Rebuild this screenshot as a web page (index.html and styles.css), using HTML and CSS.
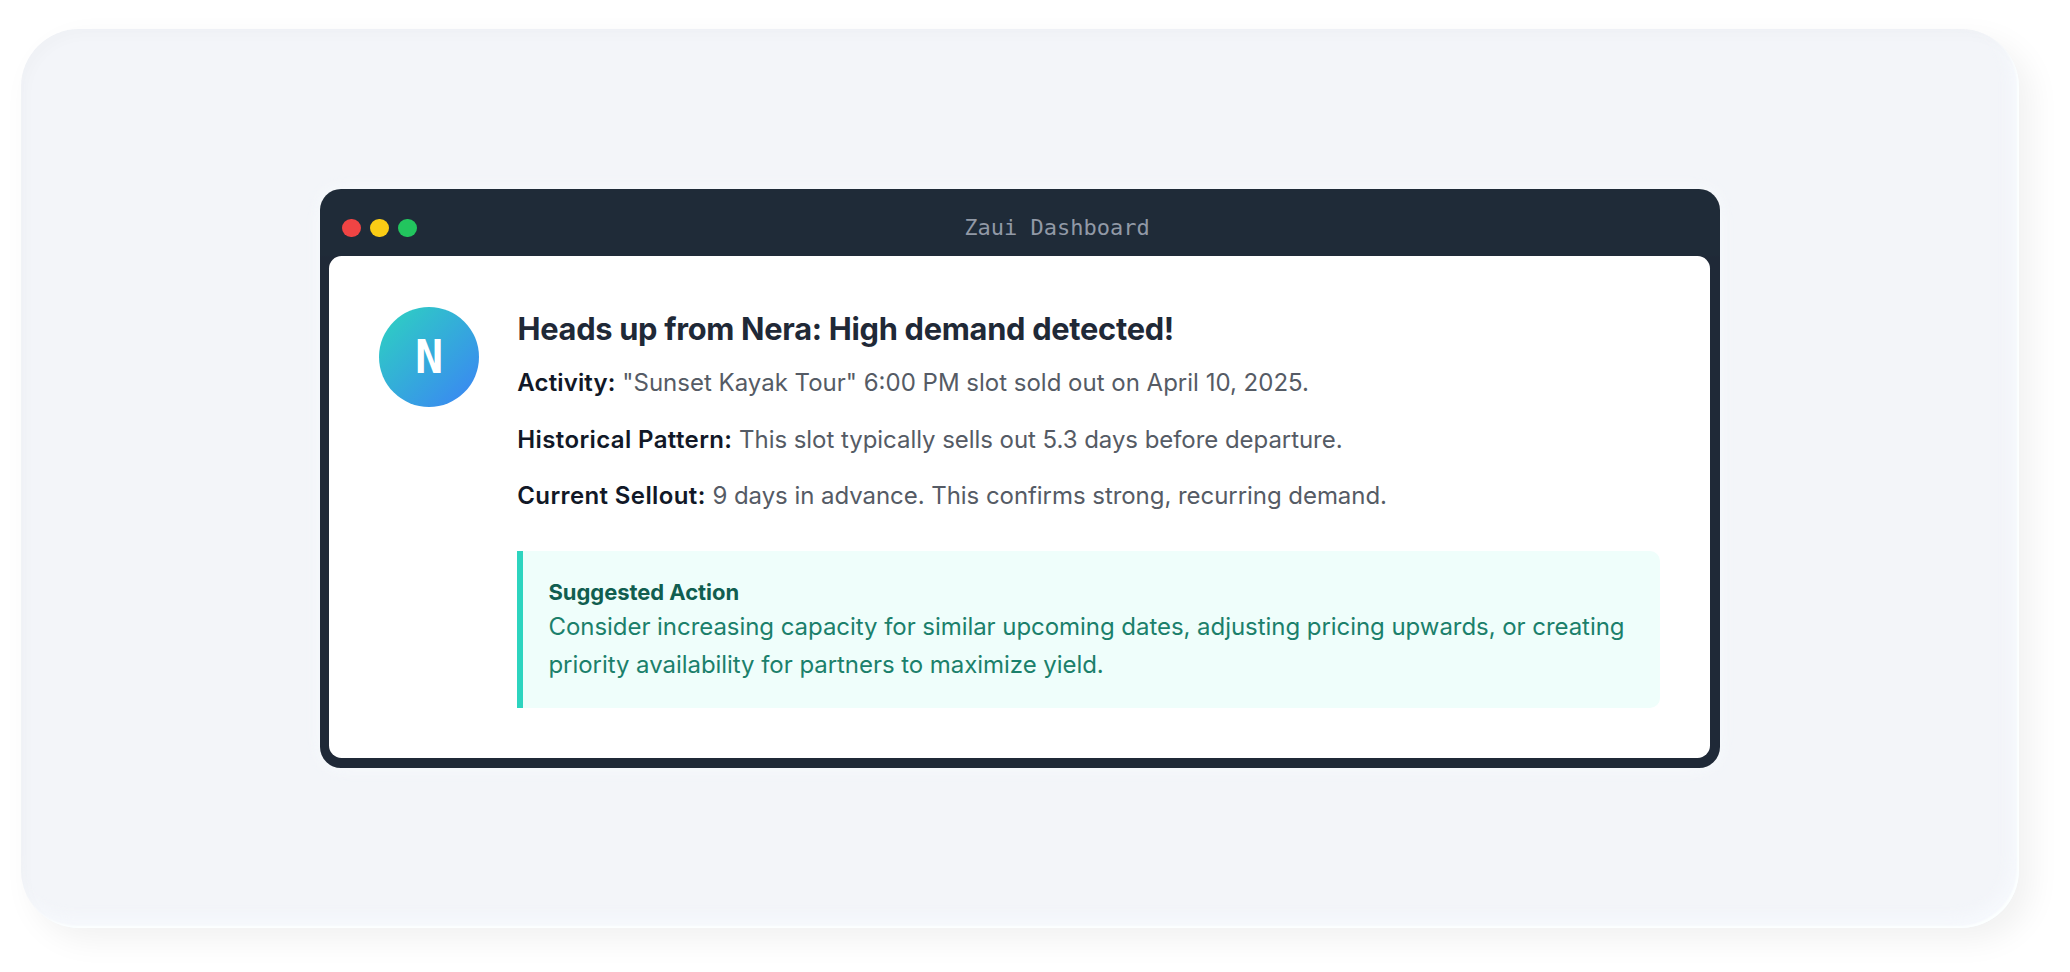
FILE: index.html
```html
<!DOCTYPE html>
<html lang="en">
<head>
<meta charset="utf-8">
<title>Zaui Dashboard</title>
<link rel="stylesheet" href="styles.css">
</head>
<body>
<main class="stage">
  <section class="window">
    <header class="titlebar">
      <div class="dots"><span class="dot red"></span><span class="dot yellow"></span><span class="dot green"></span></div>
      <div class="window-title">Zaui Dashboard</div>
    </header>
    <div class="panel">
      <div class="avatar">N</div>
      <div class="content">
        <h1 class="heading">Heads up from Nera: High demand detected!</h1>
        <p class="fact activity"><strong>Activity:</strong> <span>"Sunset Kayak Tour" 6:00 PM slot sold out on April 10, 2025.</span></p>
        <p class="fact"><strong>Historical Pattern:</strong> <span>This slot typically sells out 5.3 days before departure.</span></p>
        <p class="fact"><strong>Current Sellout:</strong> <span>9 days in advance. This confirms strong, recurring demand.</span></p>
        <aside class="callout">
          <h2 class="callout-title">Suggested Action</h2>
          <p class="callout-text">Consider increasing capacity for similar upcoming dates, adjusting pricing upwards, or creating<br>priority availability for partners to maximize yield.</p>
        </aside>
      </div>
    </div>
  </section>
</main>
</body>
</html>
```
FILE: styles.css
```css
* { box-sizing: border-box; margin: 0; }
body {
  height: 972px;
  padding: 29px 51px 44px 21px;
  background: #fff;
  font-family: Inter, "Liberation Sans", sans-serif;
  overflow: hidden;
}
.stage {
  height: 899px;
  display: flex;
  align-items: center;
  justify-content: center;
  padding-right: 1px;
  padding-bottom: 1px;
  border-radius: 58px;
  background: #f3f5f9;
  box-shadow: 12px 12px 32px rgba(0, 0, 0, .06),
    inset 6px 8px 12px rgba(0, 0, 0, .015),
    inset -2px -2px 2px #fcffff,
    inset -8px -10px 16px rgba(248, 251, 255, .7);
}
.window {
  width: 1400px;
  height: 579px;
  padding: 9.4px;
  border-radius: 21px;
  background: linear-gradient(#1f2b38 66px, #1f2937 68px);
  box-shadow: 0 0 18px rgba(250, 253, 255, .7);
}
.titlebar {
  height: 58.6px;
  display: flex;
  align-items: center;
  padding: 1.6px 13px 0;
}
.dots { display: flex; gap: 9.4px; }
.dot { width: 18.8px; height: 18.8px; border-radius: 50%; }
.red { background: #ef4444; }
.yellow { background: #facc15; }
.green { background: #22c55e; }
.window-title {
  flex: 1;
  text-align: center;
  font: 22px/31px "DejaVu Sans Mono", monospace;
  color: #9199a6;
}
.panel {
  height: 501.8px;
  display: flex;
  gap: 37.6px;
  padding: 50.2px;
  border-radius: 12.5px;
  background: #fff;
}
.avatar {
  flex: none;
  width: 100px;
  height: 100px;
  border-radius: 50%;
  display: flex;
  align-items: center;
  justify-content: center;
  background: linear-gradient(135deg, #2dd4bf, #3b82f6);
  color: #fff;
  font: bold 47px/1 "DejaVu Sans Mono", monospace;
}
.content { flex: 1; white-space: nowrap; }
.heading {
  padding: .5px 0 0 .8px;
  margin-bottom: 13px;
  font-size: 30.8px;
  line-height: 43.9px;
  font-weight: 700;
  letter-spacing: -.29px;
  color: #1f2937;
}
.fact {
  padding-left: .6px;
  margin-bottom: 18.9px;
  font-size: 24px;
  line-height: 37.6px;
  letter-spacing: -.05px;
  color: #555b65;
}
.fact strong { font-weight: 600; letter-spacing: .38px; color: #111827; }
.activity { letter-spacing: 0; }
.activity strong { letter-spacing: .15px; }
.callout {
  margin-top: 36.2px;
  padding: 25.8px 25.1px 24.4px 25.8px;
  border-left: 6.3px solid #2dd4bf;
  border-radius: 0 10px 10px 0;
  background: #effefb;
}
.callout-title {
  font-size: 22px;
  line-height: 31.4px;
  font-weight: 700;
  letter-spacing: -.05px;
  color: #115e50;
}
.callout-text {
  font-size: 24px;
  line-height: 37.6px;
  letter-spacing: -.05px;
  color: #1b806b;
}
```
